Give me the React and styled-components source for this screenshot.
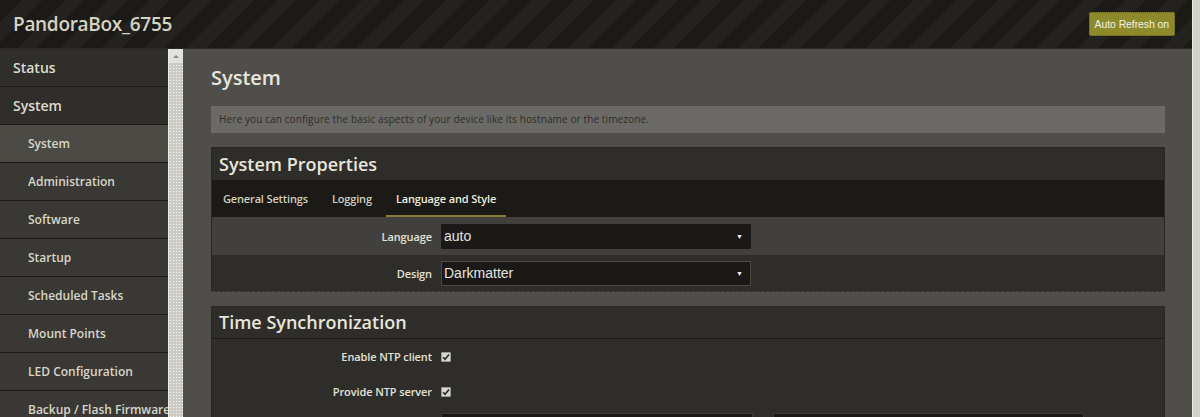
import React from 'react'
import styled, { createGlobalStyle } from 'styled-components'

const GlobalStyle = createGlobalStyle`
    html, body {
        margin: 0;
        padding: 0;
        background: #4f4e4a;
    }
    body {
        font-family: "Open Sans", "DejaVu Sans", sans-serif;
    }
`

const menu = [
    { name: 'Status' },
    { name: 'System' },
    { name: 'System', sub: true, active: true },
    { name: 'Administration', sub: true },
    { name: 'Software', sub: true },
    { name: 'Startup', sub: true },
    { name: 'Scheduled Tasks', sub: true },
    { name: 'Mount Points', sub: true },
    { name: 'LED Configuration', sub: true },
    { name: 'Backup / Flash Firmware', sub: true },
]

function Check() {
    return (
        <CheckBox>
            <svg width="8" height="8" viewBox="0 0 8 8">
                <path d="M1 4.2 L3.1 6.3 L7 1.5" fill="none" stroke="#2a2a2a" strokeWidth="1.6" />
            </svg>
        </CheckBox>
    )
}

function App() {
    return (
        <Root>
            <GlobalStyle />
            <Frame>
                <Header>
                    <Brand>PandoraBox_6755</Brand>
                    <RefreshButton>Auto Refresh on</RefreshButton>
                </Header>
                <Body>
                    <Sidebar>
                        {menu.map((m, i) => (
                            <NavItem key={i} $sub={m.sub} $active={m.active}>{m.name}</NavItem>
                        ))}
                    </Sidebar>
                    <SideScroll>
                        <ScrollArrow />
                    </SideScroll>
                    <Main>
                        <PageTitle>System</PageTitle>
                        <Description>
                            Here you can configure the basic aspects of your device like its hostname or the timezone.
                        </Description>

                        <Panel>
                            <PanelHead $h={32}>System Properties</PanelHead>
                            <Tabs>
                                <Tab>General Settings</Tab>
                                <Tab>Logging</Tab>
                                <Tab $active>Language and Style</Tab>
                            </Tabs>
                            <Row $h={38} $bg="#42403c">
                                <Label>Language</Label>
                                <SelectBox>
                                    <span>auto</span>
                                    <Caret>▼</Caret>
                                </SelectBox>
                            </Row>
                            <Row $h={36} $bg="#2f2d2a">
                                <Label>Design</Label>
                                <SelectBox $bordered>
                                    <span>Darkmatter</span>
                                    <Caret>▼</Caret>
                                </SelectBox>
                            </Row>
                            <PanelFoot />
                        </Panel>

                        <Panel>
                            <PanelHead $h={31} $line>Time Synchronization</PanelHead>
                            <Row $h={35}>
                                <Label>Enable NTP client</Label>
                                <Check />
                            </Row>
                            <Row $h={35}>
                                <Label>Provide NTP server</Label>
                                <Check />
                            </Row>
                            <Row $h={34} $top>
                                <Label />
                                <Inputs>
                                    <TextInput $w={312} />
                                    <Remove />
                                    <TextInput $w={311} />
                                    <Remove />
                                </Inputs>
                            </Row>
                        </Panel>
                    </Main>
                </Body>
            </Frame>
            <PageScroll />
        </Root>
    )
}

const Root = styled.div`
    display: flex;
    width: 1200px;
    height: 417px;
    overflow: hidden;
`

const Frame = styled.div`
    flex: 1;
    min-width: 0;
    display: flex;
    flex-direction: column;
`

const PageScroll = styled.div`
    width: 7px;
    flex-shrink: 0;
    background: #d2d2ca;
    border-left: 1px solid #ececE6;
`

const Header = styled.header`
    height: 49px;
    flex-shrink: 0;
    box-sizing: border-box;
    display: flex;
    align-items: center;
    justify-content: space-between;
    padding: 0 17px 0 13px;
    background: repeating-linear-gradient(135deg, #1c1a17 0 16px, #24221f 16px 30px);
    border-bottom: 1px solid #2b2926;
`

const Brand = styled.h1`
    margin: 0;
    font-size: 19px;
    font-weight: 600;
    color: #d4d4c2;
    letter-spacing: -0.3px;
`

const RefreshButton = styled.button`
    height: 24px;
    padding: 0 5px;
    border: 1px dotted #5d5b1c;
    border-radius: 2px;
    background: #8d8a2b;
    color: #f2f2e6;
    font-family: "Liberation Sans", Arial, sans-serif;
    font-size: 10.5px;
    letter-spacing: -0.1px;
    cursor: pointer;
`

const Body = styled.div`
    flex: 1;
    min-height: 0;
    display: flex;
`

const Sidebar = styled.nav`
    width: 168px;
    flex-shrink: 0;
    overflow: hidden;
    background-color: #383632;
    background-image: radial-gradient(rgba(255, 255, 255, 0.05) 1px, transparent 1px);
    background-size: 5px 5px;
`

const NavItem = styled.div`
    height: 38px;
    box-sizing: border-box;
    display: flex;
    align-items: center;
    padding-left: ${p => (p.$sub ? 28 : 13)}px;
    border-bottom: 1px solid #1c1a18;
    font-size: ${p => (p.$sub ? 12 : 14)}px;
    font-weight: 600;
    color: ${p => (p.$sub ? '#d6d6c8' : '#dcdccc')};
    white-space: nowrap;
    background-color: ${p => (p.$active ? '#4c4a45' : p.$sub ? '#3a3834' : '#302e2b')};
`

const SideScroll = styled.div`
    width: 15px;
    flex-shrink: 0;
    box-sizing: border-box;
    border-left: 1px solid #eeeee8;
    background-color: #cbcbc3;
    background-image: radial-gradient(rgba(255, 255, 255, 0.8) 0.7px, transparent 0.8px);
    background-size: 3px 3px;
`

const ScrollArrow = styled.div`
    height: 14px;
    background: #e2e2dc;
    display: flex;
    align-items: center;
    justify-content: center;
    &::before {
        content: '';
        border-left: 3px solid transparent;
        border-right: 3px solid transparent;
        border-bottom: 3px solid #8a8a84;
    }
`

const Main = styled.main`
    flex: 1;
    min-width: 0;
    overflow: hidden;
    padding: 0 27px 0 28px;
    background: #4f4e4a;
`

const PageTitle = styled.h2`
    margin: 0;
    height: 57px;
    line-height: 57px;
    font-size: 20px;
    font-weight: 600;
    color: #e6e6dc;
`

const Description = styled.div`
    height: 27px;
    line-height: 27px;
    padding: 0 8px;
    background: #6b6a66;
    color: #2e2d2a;
    font-size: 10px;
    letter-spacing: 0.12px;
    white-space: nowrap;
    overflow: hidden;
`

const Panel = styled.section`
    margin-top: 14px;
    background: #2f2d2a;
    border: 1px solid #2a2825;
    border-bottom: none;
`

const PanelHead = styled.h3`
    margin: 0;
    height: ${p => p.$h}px;
    line-height: ${p => p.$h}px;
    padding: 0 7px;
    font-size: 18px;
    font-weight: 600;
    color: #e6e6da;
    border-bottom: ${p => (p.$line ? '1px solid #1c1a18' : 'none')};
`

const Tabs = styled.div`
    display: flex;
    gap: 4px;
    height: 37px;
    padding-left: 1px;
    background: #1c1a17;
`

const Tab = styled.div`
    box-sizing: border-box;
    padding: 0 10px;
    line-height: 37px;
    font-size: 11px;
    font-weight: 600;
    letter-spacing: -0.15px;
    color: ${p => (p.$active ? '#ececdf' : '#cfcfbf')};
    border-bottom: 2px solid ${p => (p.$active ? '#8a7c36' : 'transparent')};
`

const Row = styled.div`
    display: grid;
    grid-template-columns: 220px 1fr;
    column-gap: 9px;
    align-items: ${p => (p.$top ? 'start' : 'center')};
    padding-top: ${p => (p.$top ? 4 : 0)}px;
    box-sizing: border-box;
    height: ${p => p.$h}px;
    background: ${p => p.$bg || 'transparent'};
`

const Label = styled.label`
    text-align: right;
    font-size: 11px;
    font-weight: 600;
    letter-spacing: -0.1px;
    color: #e2e2d4;
    white-space: nowrap;
`

const SelectBox = styled.div`
    width: 310px;
    height: 25px;
    box-sizing: border-box;
    display: flex;
    align-items: center;
    justify-content: space-between;
    padding: 0 7px 0 2px;
    border: 1px solid ${p => (p.$bordered ? '#4d4a44' : '#1b1a18')};
    background-color: #1a1917;
    background-image: radial-gradient(rgba(255, 255, 255, 0.05) 0.6px, transparent 0.7px);
    background-size: 2px 2px;
    color: #e4e4e0;
    font-family: "Liberation Sans", Arial, sans-serif;
    font-size: 14px;
`

const Caret = styled.span`
    font-size: 7px;
    color: #f0f0f0;
`

const PanelFoot = styled.div`
    border-top: 1px dashed #44423d;
`

const CheckBox = styled.span`
    width: 10px;
    height: 10px;
    box-sizing: border-box;
    display: flex;
    align-items: center;
    justify-content: center;
    background: #d6d6d2;
    border: 1px solid #9a9a94;
    border-radius: 1px;
`

const Inputs = styled.div`
    display: flex;
    align-items: center;
    gap: 5px;
`

const TextInput = styled.input`
    width: ${p => p.$w}px;
    height: 25px;
    box-sizing: border-box;
    border: 1px solid #3c3a36;
    background: #1a1917;
    color: #e4e4e0;
`

const Remove = styled.span`
    width: 10px;
    height: 14px;
    background: #cfcfca;
    border-radius: 1px;
`

export default App
